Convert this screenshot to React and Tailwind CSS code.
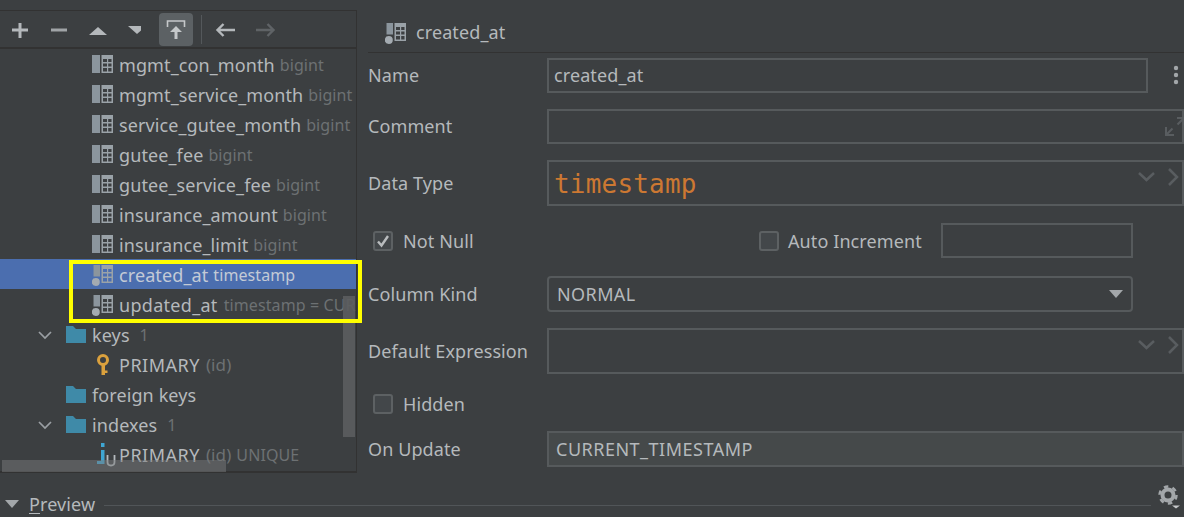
import React from "react";

const FONT = "font-['Noto_Sans','Open_Sans',sans-serif]";

function ColumnIcon({ dot = false }) {
  return (
    <svg width="21" height="22" viewBox="0 0 21 22" className="shrink-0">
      {dot ? (
        <>
          <path d="M1.500 1H8v11.500H1.500z" fill="#8b959d" />
          <circle cx="3.800" cy="18" r="4" fill="#a4abb1" />
        </>
      ) : (
        <path d="M0 1h8v18H0z" fill="#8b959d" />
      )}
      <path
        fillRule="evenodd"
        d="M9.500 1H21v18H9.500zM11 5v3h4V5zM16.200 5v3h3.300V5zM11 9.500v3h4v-3zM16.200 9.500v3h3.300v-3zM11 14v3.500h4V14zM16.200 14v3.500h3.300V14z"
        fill="#9aa2a8"
      />
    </svg>
  );
}

function FolderIcon() {
  return (
    <svg width="21" height="18" viewBox="0 0 21 18" className="shrink-0">
      <path d="M1 0h7l3 3h10v14H1z" fill="#3f8aa8" />
    </svg>
  );
}

function KeyIcon() {
  return (
    <svg width="14" height="22" viewBox="0 0 14 22" className="shrink-0">
      <circle cx="7" cy="6" r="4.500" fill="none" stroke="#dba13d" strokeWidth="3" />
      <path d="M5.500 10v11h3.500v-2h2.500v-2.500H9V10z" fill="#dba13d" />
    </svg>
  );
}

function IndexIcon() {
  return (
    <svg width="20" height="24" viewBox="0 0 20 24" className="shrink-0">
      <path d="M4 0h3.500v4H4zM4 7h3.500v14H0v-3h4z" fill="#3ea6d3" />
      <path d="M10.500 12v7q0 3.500 3.500 3.500t3.500-3.500v-7" fill="none" stroke="#b4babd" strokeWidth="1.800" />
    </svg>
  );
}

function Chevron() {
  return (
    <svg width="14" height="9" viewBox="0 0 14 9" className="shrink-0">
      <path d="M1 1l6 6 6-6" fill="none" stroke="#9a9fa3" strokeWidth="1.700" />
    </svg>
  );
}

const columns = [
  ["mgmt_con_month", "bigint"],
  ["mgmt_service_month", "bigint"],
  ["service_gutee_month", "bigint"],
  ["gutee_fee", "bigint"],
  ["gutee_service_fee", "bigint"],
  ["insurance_amount", "bigint"],
  ["insurance_limit", "bigint"],
];

function TreeRow({ left, children, selected = false }) {
  return (
    <div
      className={`flex items-center h-[30px] pt-[2px] whitespace-nowrap ${selected ? "bg-[#4b6eaf]" : ""}`}
      style={{ paddingLeft: left }}
    >
      {children}
    </div>
  );
}

function Toolbar() {
  return (
    <div className="flex items-center h-[38px] border-b-2 border-[#323232] pl-[11px]">
      <svg width="130" height="20" viewBox="0 0 130 20" className="shrink-0">
        <path d="M1 11h16M9 4v15" stroke="#b4b8bb" strokeWidth="3" />
        <path d="M40 11h16" stroke="#a0a4a7" strokeWidth="3" />
        <path d="M78 16l9-8 9 8z" fill="#b4b8bb" />
        <path d="M117 7h18l-9 8z" fill="#b4b8bb" />
      </svg>
      <div className="flex items-center justify-center w-[34px] h-[33px] rounded-[4px] bg-[#5c6164] ml-[18px]">
        <svg width="20" height="20" viewBox="0 0 20 20">
          <path d="M1.500 8V2h17v6" fill="none" stroke="#c5c8ca" strokeWidth="1.600" />
          <path d="M10 7l6 6h-4.500v7h-3v-7H4z" fill="#c5c8ca" />
        </svg>
      </div>
      <div className="w-px h-[29px] bg-[#54585b] ml-2" />
      <svg width="68" height="18" viewBox="0 0 68 18" className="ml-3 shrink-0">
        <path d="M21 10H3.500M9.500 4l-6 6 6 6" fill="none" stroke="#b4b8bb" strokeWidth="2.400" />
        <path d="M42 10h17.500M53.500 4l6 6-6 6" fill="none" stroke="#5f6366" strokeWidth="2.400" />
      </svg>
    </div>
  );
}

function Tree() {
  return (
    <div className="relative w-[357px] h-[463px] mt-[10px] border-t border-r border-b-2 border-[#323232] shrink-0">
      <Toolbar />
      <div className="h-[423px] overflow-hidden text-[18px] text-[#b5b9bc]">
        {columns.map(([name, type]) => (
          <TreeRow key={name} left={92}>
            <ColumnIcon />
            <span className="ml-[6px]">{name}</span>
            <span className="ml-[5px] text-[#6d7173] text-[16px]">{type}</span>
          </TreeRow>
        ))}
        <TreeRow left={92} selected>
          <ColumnIcon dot />
          <span className="ml-[6px] text-[#c3cad6]">created_at</span>
          <span className="ml-[5px] text-[#c3cad6] text-[16px]">timestamp</span>
        </TreeRow>
        <TreeRow left={92}>
          <ColumnIcon dot />
          <span className="ml-[6px] tracking-[0.3px]">updated_at</span>
          <span className="ml-[6px] text-[#6d7173] text-[16px]">timestamp = CURRENT_TIMESTAMP</span>
        </TreeRow>
        <TreeRow left={38}>
          <Chevron />
          <span className="ml-[13px]"><FolderIcon /></span>
          <span className="ml-[6px]">keys</span>
          <span className="ml-[10px] text-[#6d7173] text-[16px]">1</span>
        </TreeRow>
        <TreeRow left={96}>
          <KeyIcon />
          <span className="ml-[9px] tracking-[0.5px]">PRIMARY</span>
          <span className="ml-[6px] text-[#6d7173] text-[17px]">(id)</span>
        </TreeRow>
        <TreeRow left={65}>
          <FolderIcon />
          <span className="ml-[6px]">foreign keys</span>
        </TreeRow>
        <TreeRow left={38}>
          <Chevron />
          <span className="ml-[13px]"><FolderIcon /></span>
          <span className="ml-[6px]">indexes</span>
          <span className="ml-[10px] text-[#6d7173] text-[16px]">1</span>
        </TreeRow>
        <TreeRow left={97}>
          <IndexIcon />
          <span className="ml-[2px] tracking-[0.5px]">PRIMARY</span>
          <span className="ml-[6px] text-[#6d7173] text-[17px]">(id)</span>
          <span className="ml-[5px] text-[#6d7173] text-[16px]">UNIQUE</span>
        </TreeRow>
      </div>
      {/* overlay scrollbars */}
      <div className="absolute left-[343px] top-[285px] w-[12px] h-[141px] bg-[#5b5d5f]/90" />
      <div className="absolute left-[2px] top-[449px] w-[224px] h-[12px] bg-[#77797b]/50" />
      {/* yellow highlight drawn on the screenshot */}
      <div className="absolute left-[69px] top-[249px] w-[293px] h-[63px] border-4 border-[#ffff00]" />
    </div>
  );
}

function Label({ children }) {
  return <div className="w-[179px] shrink-0 text-[18px] text-[#b5b9bc]">{children}</div>;
}

function Field({ children, className = "" }) {
  return (
    <div className={`flex items-center border-2 border-[#565a5c] text-[18px] text-[#b5b9bc] ${className}`}>
      {children}
    </div>
  );
}

function Check({ checked = false }) {
  return (
    <span className="flex items-center justify-center w-[20px] h-[20px] rounded-[3px] border-2 border-[#5d6163] bg-[#43474a] shrink-0">
      {checked && (
        <svg width="14" height="14" viewBox="0 0 14 14">
          <path d="M2 7.500l3.500 4L12 2" fill="none" stroke="#b9bcbe" strokeWidth="2.400" />
        </svg>
      )}
    </span>
  );
}

function ComboArrows() {
  return (
    <svg width="42" height="18" viewBox="0 0 42 18" className="absolute left-[589px] top-[6px]">
      <path d="M1 5l7.500 7L16 5M31 1l8 8-8 8" fill="none" stroke="#595d60" strokeWidth="2.500" />
    </svg>
  );
}

function Form() {
  return (
    <div className="flex-1 min-w-0 ml-[11px] overflow-hidden">
      <div className="flex items-center h-[53px] pt-[13px] pl-[17px] border-b border-[#323232] text-[18px] text-[#b5b9bc]">
        <ColumnIcon dot />
        <span className="ml-[10px]">created_at</span>
      </div>

      <div className="flex items-center mt-[4px] h-[36px]">
        <Label>Name</Label>
        <Field className="w-[601px] h-[35px] pl-[5px]">created_at</Field>
        <svg width="6" height="20" viewBox="0 0 6 20" className="ml-[25px]">
          <circle cx="3" cy="3" r="2.200" fill="#a3a7aa" />
          <circle cx="3" cy="10" r="2.200" fill="#a3a7aa" />
          <circle cx="3" cy="17" r="2.200" fill="#a3a7aa" />
        </svg>
      </div>

      <div className="flex items-center mt-[15px] h-[36px]">
        <Label>Comment</Label>
        <Field className="relative w-[660px] h-[35px]">
          <svg width="20" height="20" viewBox="0 0 20 20" className="absolute left-[616px] top-[5px]">
            <path d="M12 2h7v7M18.500 2.500l-6 6M1 11v8h8M1.500 18.500l6-6" fill="none" stroke="#595d60" strokeWidth="2" />
          </svg>
        </Field>
      </div>

      <div className="flex items-center mt-[16px] h-[46px]">
        <Label>Data Type</Label>
        <Field className="relative w-[660px] h-[46px] pl-[5px]">
          <span className="pt-[2px] font-['DejaVu_Sans_Mono',monospace] text-[26px] tracking-[0.2px] text-[#cc7832]">timestamp</span>
          <ComboArrows />
        </Field>
      </div>

      <div className="flex items-center mt-[16px] h-[37px]">
        <span className="ml-[5px]"><Check checked /></span>
        <span className="ml-[10px] pt-[2px] w-[356px] text-[18px] text-[#b5b9bc]">Not Null</span>
        <Check />
        <span className="ml-[9px] pt-[2px] w-[153px] text-[18px] text-[#b5b9bc]">Auto Increment</span>
        <Field className="w-[192px] h-[35px]" />
      </div>

      <div className="flex items-center mt-[17px] h-[36px]">
        <Label>Column Kind</Label>
        <Field className="relative w-[586px] h-[36px] rounded-[4px] pl-[8px] tracking-[0.4px]">
          NORMAL
          <svg width="14" height="8" viewBox="0 0 14 8" className="absolute right-[8px] top-[12px]">
            <path d="M0 0h14L7 8z" fill="#a3a7aa" />
          </svg>
        </Field>
      </div>

      <div className="flex items-center mt-[16px] h-[46px]">
        <Label>Default Expression</Label>
        <Field className="relative w-[660px] h-[46px]">
          <ComboArrows />
        </Field>
      </div>

      <div className="flex items-center mt-[19px] h-[22px]">
        <span className="ml-[5px]"><Check /></span>
        <span className="ml-[10px] text-[18px] text-[#b5b9bc]">Hidden</span>
      </div>

      <div className="flex items-center mt-[16px] h-[36px]">
        <Label>On Update</Label>
        <Field className="w-[660px] h-[36px] pl-[7px] bg-[#45494a] tracking-[0.5px]">CURRENT_TIMESTAMP</Field>
      </div>
    </div>
  );
}

export default function App() {
  return (
    <div className={`w-[1184px] h-[517px] bg-[#3c3f41] overflow-hidden tracking-[0.1px] ${FONT}`}>
      <div className="flex h-[473px]">
        <Tree />
        <Form />
      </div>
      <div className="flex items-center h-[44px] pl-[5px]">
        <svg width="14" height="8" viewBox="0 0 14 8" className="mt-[18px] shrink-0">
          <path d="M0 0h14L7 8z" fill="#a3a7aa" />
        </svg>
        <span className="ml-[10px] mt-[18px] text-[18px] text-[#b5b9bc]">
          <span className="underline underline-offset-2">P</span>review
        </span>
        <div className="ml-[9px] mt-[20px] w-[1047px] h-px bg-[#515558] shrink-0" />
        <svg width="26" height="24" viewBox="0 0 26 24" className="ml-[7px] mt-[3px] shrink-0">
          <circle cx="10" cy="10" r="5.500" fill="none" stroke="#a3a7aa" strokeWidth="4" />
          <circle cx="10" cy="10" r="8.500" fill="none" stroke="#a3a7aa" strokeWidth="2.500" strokeDasharray="4.500 4.400" />
          <path d="M14 20.500h8l-4 3z" fill="#c5c8ca" />
        </svg>
      </div>
    </div>
  );
}
